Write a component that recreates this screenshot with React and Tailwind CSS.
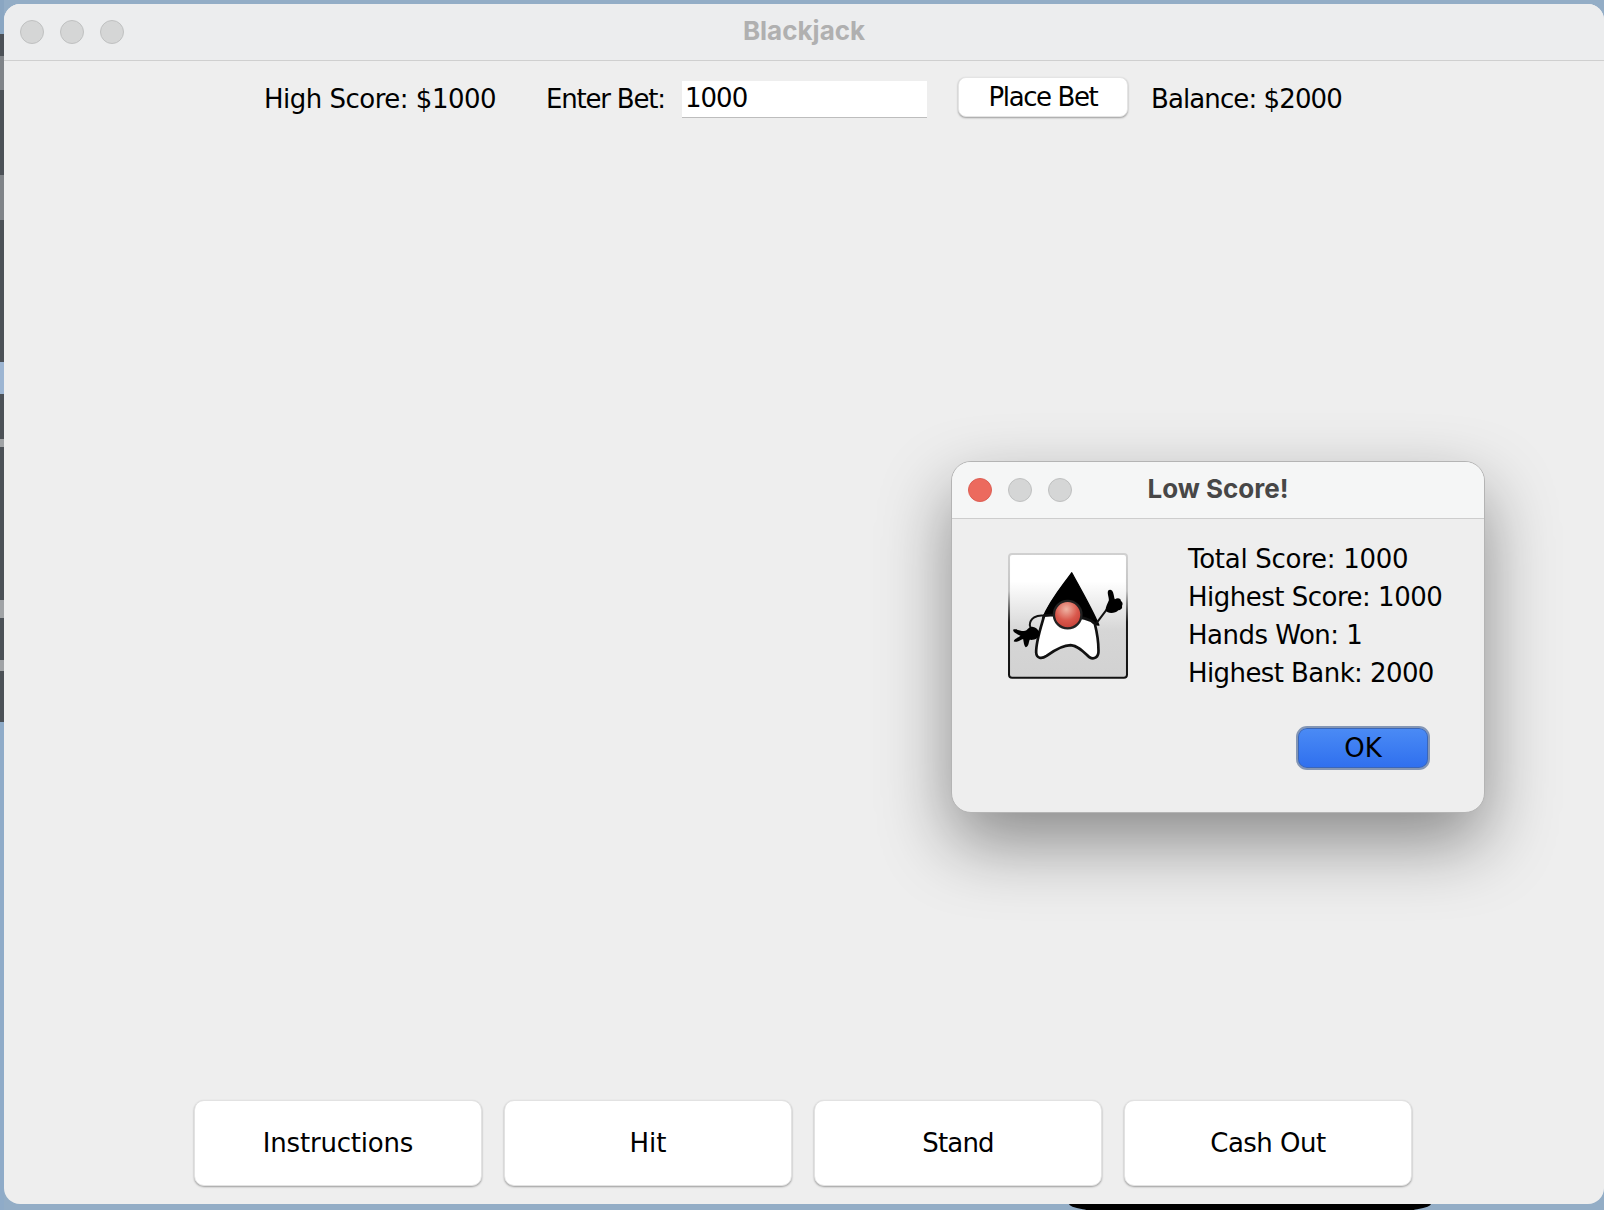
function Dot({ red }) {
  return (
    <span
      className={
        red
          ? "w-6 h-6 rounded-full bg-[#ec6a5e] border border-[#dc5f54]"
          : "w-6 h-6 rounded-full bg-[#d5d6d6] border border-[#bfc0c0]"
      }
    />
  );
}

function Duke() {
  return (
    <svg width="120" height="126" viewBox="25 25 358 376" className="block">
      <defs>
        <linearGradient id="bg" x1="0" y1="0" x2="0" y2="1">
          <stop offset="0.22" stopColor="#ffffff" />
          <stop offset="0.62" stopColor="#d6d6d6" />
          <stop offset="1" stopColor="#d2d2d2" />
        </linearGradient>
        <linearGradient id="edge" x1="0" y1="0" x2="0" y2="1">
          <stop offset="0" stopColor="#d0d0d0" />
          <stop offset="0.3" stopColor="#c4c4c4" />
          <stop offset="0.55" stopColor="#1a1a1a" />
          <stop offset="1" stopColor="#111111" />
        </linearGradient>
        <radialGradient id="nose" cx="0.45" cy="0.3" r="0.75">
          <stop offset="0" stopColor="#efb4a4" />
          <stop offset="0.55" stopColor="#d9584c" />
          <stop offset="1" stopColor="#c23c34" />
        </radialGradient>
      </defs>
      <rect x="28" y="28" width="352" height="369" rx="9" fill="url(#bg)" stroke="url(#edge)" strokeWidth="6" />
      <path d="M215 84 C190 120 150 165 128 220 L296 240 C275 190 240 130 215 84 Z" fill="#000" stroke="#000" strokeWidth="4" strokeLinejoin="round" />
      <path
        d="M133 212 C122 250 108 290 109 322 C110 340 125 342 140 332 C165 314 190 300 212 300 C235 302 250 320 268 336 C282 344 296 336 295 316 C295 290 290 260 284 236 C270 222 240 215 205 215 C180 212 155 208 133 212 Z"
        fill="#fff"
        stroke="#111"
        strokeWidth="8"
        strokeLinejoin="round"
      />
      <circle cx="203" cy="209" r="41" fill="url(#nose)" stroke="#222" strokeWidth="7" />
      <path d="M135 212 C110 208 90 220 90 240 C92 254 104 260 116 262" fill="none" stroke="#111" strokeWidth="6" />
      <path d="M288 236 L322 190" fill="none" stroke="#111" strokeWidth="6" />
      <path
        d="M316 196 C316 186 322 176 326 166 C326 154 320 146 324 137 C330 132 338 136 340 148 C342 156 342 160 344 163 C352 158 362 160 362 168 C368 172 368 178 365 183 C368 190 360 196 354 196 C346 206 322 208 316 196 Z"
        fill="#000"
      />
      <path
        d="M120 262 C112 248 98 240 88 248 C82 254 78 258 72 258 C62 258 50 250 40 254 C40 262 54 268 62 272 C56 278 44 280 42 288 C50 294 60 286 70 282 C72 290 72 302 78 306 C88 304 86 290 90 284 C104 286 120 278 120 262 Z"
        fill="#000"
      />
    </svg>
  );
}

function BigButton({ children, className }) {
  return (
    <button
      className={
        "w-[288px] h-[86px] rounded-[10px] bg-white border border-[#e2e2e2] shadow-[0_1px_2px_rgba(0,0,0,0.35)] text-[26px] text-black " +
        className
      }
    >
      {children}
    </button>
  );
}

export default function App() {
  return (
    <div className="relative w-[1604px] h-[1210px] overflow-hidden bg-[#93adc6] flex font-['DejaVu_Sans',sans-serif] text-black">
      <div className="absolute left-[1069px] top-[1190px] w-[362px] h-[28px] rounded-[50%] bg-black" />
      <div className="w-1 flex flex-col shrink-0 relative">
        <div className="h-[34px] bg-[#8aa6c2]" />
        <div className="h-[22px] bg-[#4c5157]" />
        <div className="h-[34px] bg-[#7f8388]" />
        <div className="h-[85px] bg-[#4c5157]" />
        <div className="h-[45px] bg-[#7f8388]" />
        <div className="h-[142px] bg-[#4c5157]" />
        <div className="h-[32px] bg-[#9db5d2]" />
        <div className="h-[45px] bg-[#4c5157]" />
        <div className="h-[8px] bg-[#a0a3a6]" />
        <div className="h-[153px] bg-[#4c5157]" />
        <div className="h-[18px] bg-[#a0a3a6]" />
        <div className="h-[42px] bg-[#4c5157]" />
        <div className="h-[11px] bg-[#a0a3a6]" />
        <div className="h-[51px] bg-[#4c5157]" />
        <div className="flex-1 bg-[#8fabc8]" />
      </div>
      <div className="flex-1 flex flex-col pt-1 pb-1.5">
        <div className="flex-1 flex flex-col rounded-[16px] bg-[#eeeeee] overflow-hidden relative">
          <div className="relative h-[57px] shrink-0 bg-[#ecedee] border-b border-[#cfcfcf] flex items-center pl-4 gap-4">
            <Dot />
            <Dot />
            <Dot />
            <span className="absolute inset-x-0 top-0 h-[52px] flex items-center justify-center font-['Inter',sans-serif] font-bold text-[26px] text-[#b0b0b0]">
              Blackjack
            </span>
          </div>
          <div className="h-[76px] shrink-0 flex items-center pl-[260px] text-[26px]">
            <span className="w-[282px] tracking-[-0.5px]">High Score: $1000</span>
            <span className="w-[136px] tracking-[-1.2px]">Enter Bet:</span>
            <input
              readOnly
              value="1000"
              className="w-[245px] h-[37px] bg-white border-b border-[#bdbdbd] pl-[3px] text-[26px] tracking-[-1px] outline-none"
            />
            <button className="ml-[31px] w-[170px] h-[40px] rounded-[8px] bg-white border border-[#e4e4e4] shadow-[0_1px_2px_rgba(0,0,0,0.35)] text-[26px] tracking-[-1.4px] -mt-[4px]">
              Place Bet
            </button>
            <span className="ml-[23px] tracking-[-0.9px]">Balance: $2000</span>
          </div>
          <div className="flex-1" />
          <div className="h-[104px] shrink-0 flex items-start pl-[190px] gap-[22px]">
            <BigButton className="tracking-[-0.2px]">Instructions</BigButton>
            <BigButton className="tracking-normal">Hit</BigButton>
            <BigButton className="tracking-[-0.8px]">Stand</BigButton>
            <BigButton className="tracking-[-0.5px]">Cash Out</BigButton>
          </div>
        </div>
      </div>

      <div className="absolute left-[951px] top-[461px] w-[534px] h-[352px] rounded-[20px] bg-[#eeeeee] border border-[#b4b4b4] shadow-[0_30px_70px_rgba(0,0,0,0.42)] overflow-hidden flex flex-col">
        <div className="relative h-[57px] shrink-0 bg-[#f5f6f6] border-b border-[#cdcdcd] flex items-center pl-4 gap-4">
          <Dot red />
          <Dot />
          <Dot />
          <span className="absolute inset-0 pb-1 flex items-center justify-center font-['Inter',sans-serif] font-bold text-[26px] text-[#474747]">
            Low Score!
          </span>
        </div>
        <div className="flex pl-[56px] pt-[34px]">
          <Duke />
          <div className="ml-[60px] -mt-[13px] text-[26px] leading-[38px] whitespace-nowrap">
            <div className="tracking-[-0.28px]">Total Score: 1000</div>
            <div className="tracking-[-0.5px]">Highest Score: 1000</div>
            <div className="tracking-[-0.5px]">Hands Won: 1</div>
            <div className="tracking-[-0.58px]">Highest Bank: 2000</div>
          </div>
        </div>
        <div className="flex justify-end pr-[54px] mt-[34px]">
          <button className="w-[134px] h-[44px] rounded-[11px] bg-gradient-to-b from-[#4b8bf5] to-[#2f6fee] border-2 border-[#8496b4] shadow-[inset_0_0_0_1px_#3a66b8] text-[26px] text-black">
            OK
          </button>
        </div>
      </div>
    </div>
  );
}
